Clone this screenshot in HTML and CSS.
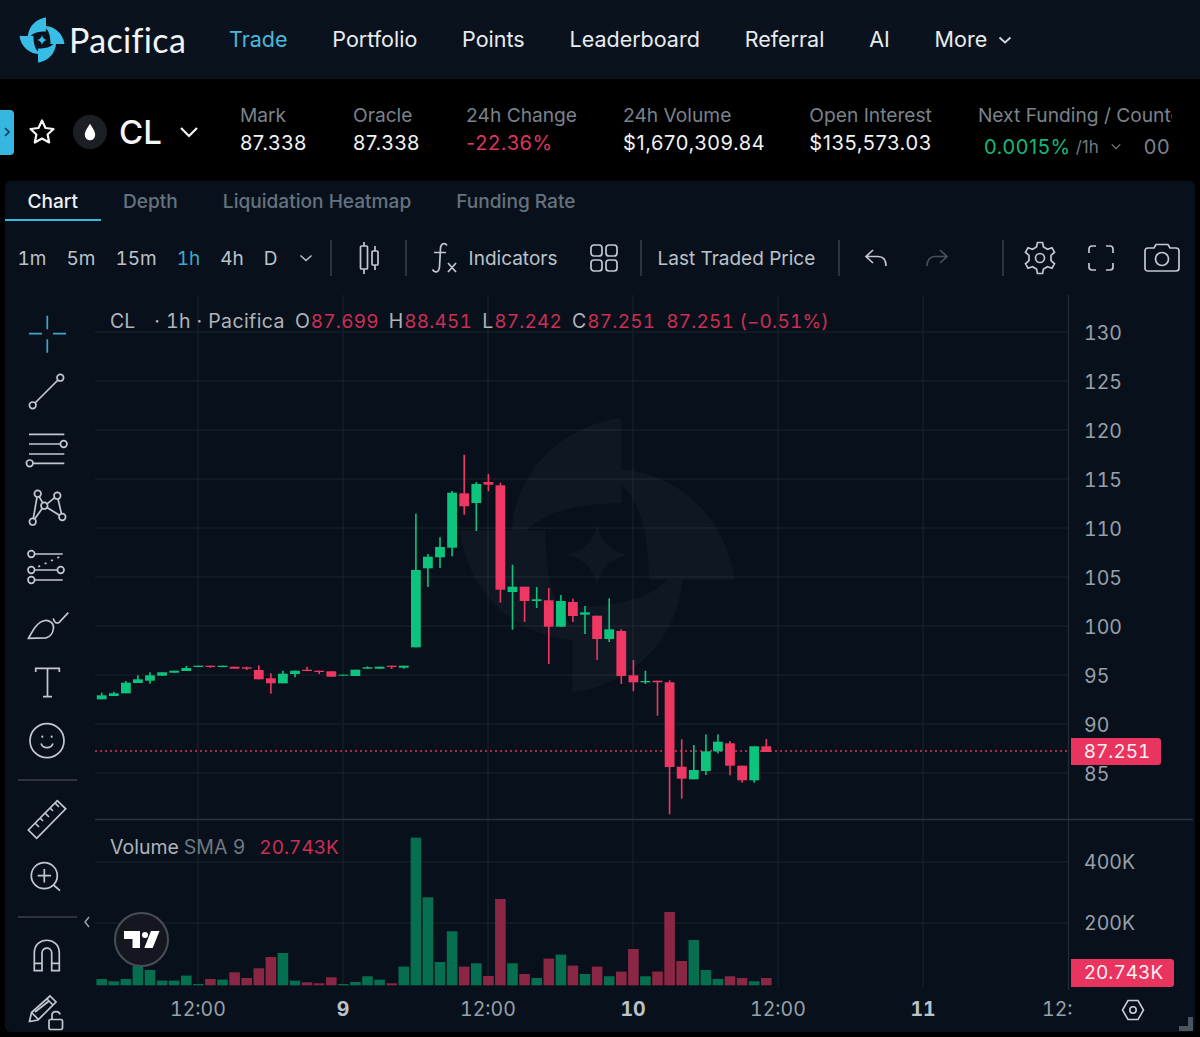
FILE: index.html
```html
<!DOCTYPE html>
<html lang="en">
<head>
  <meta charset="UTF-8" />
  <title>Pacifica - CL</title>
  <link rel="stylesheet" href="styles.css">
</head>
<body>
  <nav class="topnav">
    <div class="brand">
      <svg class="brand-mark" viewBox="-23 -23 46 46">
        <path d="M4 -22.5C-7 -21 -15 -12 -14 0C-12 -6 -6 -8.500 4 -8.500Z" />
        <path d="M4 -22.5C-7 -21 -15 -12 -14 0C-12 -6 -6 -8.500 4 -8.500Z" transform="rotate(90)" />
        <path d="M4 -22.5C-7 -21 -15 -12 -14 0C-12 -6 -6 -8.500 4 -8.500Z" transform="rotate(180)" />
        <path d="M4 -22.5C-7 -21 -15 -12 -14 0C-12 -6 -6 -8.500 4 -8.500Z" transform="rotate(270)" />
        <path d="M0 -5Q.8 -.8 5 0Q.8 .8 0 5Q-.8 .8 -5 0Q-.8 -.8 0 -5Z" />
      </svg>
      <span class="brand-name">Pacifica</span>
    </div>
    <div class="nav-links">
      <a class="nav-link active">Trade</a>
      <a class="nav-link">Portfolio</a>
      <a class="nav-link">Points</a>
      <a class="nav-link">Leaderboard</a>
      <a class="nav-link">Referral</a>
      <a class="nav-link">AI</a>
      <a class="nav-link">More
        <svg class="nav-caret" viewBox="0 0 14 8"><path d="M1.5 1.5L7 6.5L12.5 1.5" /></svg>
      </a>
    </div>
  </nav>

  <section class="stats-bar">
    <div class="side-tab"><svg viewBox="0 0 8 14"><path d="M2 3L6 7L2 11" /></svg></div>
    <svg class="fav-star" viewBox="0 0 30 30"><path d="M15 3.5L18.5 11L26.5 12L20.6 17.5L22.2 25.5L15 21.5L7.8 25.5L9.4 17.5L3.5 12L11.5 11Z" /></svg>
    <div class="coin"><svg viewBox="0 0 16 22"><path d="M8 1C11 6 14 9.500 14 14A6 6 0 0 1 2 14C2 9.500 5 6 8 1Z" /></svg></div>
    <span class="symbol">CL</span>
    <svg class="symbol-caret" viewBox="0 0 20 12"><path d="M2 2L10 10L18 2" /></svg>
    <div class="stats">
      <div class="stat"><span class="stat-label">Mark</span><span class="stat-value">87.338</span></div>
      <div class="stat"><span class="stat-label">Oracle</span><span class="stat-value">87.338</span></div>
      <div class="stat"><span class="stat-label">24h Change</span><span class="stat-value down">-22.36%</span></div>
      <div class="stat stat-volume"><span class="stat-label">24h Volume</span><span class="stat-value">$1,670,309.84</span></div>
      <div class="stat"><span class="stat-label">Open Interest</span><span class="stat-value">$135,573.03</span></div>
      <div class="stat stat-funding">
        <span class="stat-label">Next Funding / Countdown</span>
        <span class="funding-row">
          <span class="funding-rate">0.0015%</span>
          <span class="funding-unit">/1h</span>
          <svg class="funding-caret" viewBox="0 0 14 8"><path d="M2 1.500L7 6.500L12 1.500" /></svg>
          <span class="funding-time">00</span>
        </span>
      </div>
    </div>
  </section>

  <main class="panel">
    <div class="tabs">
      <a class="tab active">Chart</a>
      <a class="tab">Depth</a>
      <a class="tab">Liquidation Heatmap</a>
      <a class="tab">Funding Rate</a>
    </div>

    <div class="toolbar">
      <div class="intervals">
        <span>1m</span><span>5m</span><span>15m</span><span class="active">1h</span><span>4h</span><span>D</span>
      </div>
      <svg class="tb-caret" viewBox="0 0 14 8"><path d="M1.500 1.500L7 6.500L12.500 1.500" /></svg>
      <i class="tb-sep"></i>
      <svg class="tb-icon candles-icon" viewBox="0 0 26 34">
        <path d="M8 1V5M8 28V33M19 5V10M19 24V29" />
        <rect x="4.500" y="5" width="7" height="23" rx="1" />
        <rect x="16" y="10" width="6" height="14" rx="1" />
      </svg>
      <i class="tb-sep sep-candles"></i>
      <svg class="tb-icon fx-icon" viewBox="0 0 26 32">
        <path d="M16 3.500C14 .5 10 1 9.500 6L8.500 25C8 31 3.500 31 1.500 27.500M3 10.500H15M17 21L25 30M25 21L17 30" />
      </svg>
      <span class="tb-text indicators">Indicators</span>
      <svg class="tb-icon layout-icon" viewBox="0 0 28 28">
        <rect x="1" y="1" width="11" height="11" rx="3" /><rect x="16" y="1" width="11" height="11" rx="3" />
        <rect x="1" y="16" width="11" height="11" rx="3" /><rect x="16" y="16" width="11" height="11" rx="3" />
      </svg>
      <i class="tb-sep sep-layout"></i>
      <span class="tb-text">Last Traded Price</span>
      <i class="tb-sep sep-price"></i>
      <svg class="tb-icon undo-icon" viewBox="0 0 24 20"><path d="M9 2L2 8.500L9 15M2 8.500H14C19 8.500 22 12 22 18" /></svg>
      <svg class="tb-icon redo-icon" viewBox="0 0 24 20"><path d="M15 2L22 8.500L15 15M22 8.500H10C5 8.500 2 12 2 18" /></svg>
      <i class="tb-sep sep-redo"></i>
      <svg class="tb-icon gear-icon" viewBox="0 0 34 34">
        <path d="M14.500 1.500H19.500L20.500 6L24.500 8.300L29 6.800L31.500 11.200L28 14.300V19.700L31.500 22.800L29 27.200L24.500 25.700L20.500 28L19.500 32.500H14.500L13.500 28L9.500 25.700L5 27.200L2.500 22.800L6 19.700V14.300L2.500 11.200L5 6.800L9.500 8.300L13.500 6Z" />
        <circle cx="17" cy="17" r="4.500" />
      </svg>
      <svg class="tb-icon expand-icon" viewBox="0 0 28 28"><path d="M9 2H5Q2 2 2 5V9M19 2H23Q26 2 26 5V9M9 26H5Q2 26 2 23V19M19 26H23Q26 26 26 23V19" /></svg>
      <svg class="tb-icon camera-icon" viewBox="0 0 36 30">
        <path d="M4 5H10L12 1.500H24L26 5H32Q35 5 35 8V25Q35 28 32 28H4Q1 28 1 25V8Q1 5 4 5Z" />
        <circle cx="18" cy="16" r="6.500" />
      </svg>
    </div>

    <div class="chart-area">
      <aside class="tools">
        <svg class="tool tool-active" viewBox="17 305 60 58"><path d="M29 333.700H42M53 333.700H66M47.300 315.700V329.300M47.300 339.300V352.700" /></svg>
        <svg class="tool" viewBox="17 363 60 58"><circle cx="60.300" cy="377.700" r="3.300" /><circle cx="32.700" cy="405.300" r="3.300" /><path d="M35 403L58 380" /></svg>
        <svg class="tool" viewBox="17 421 60 58">
          <path d="M29 434.300H64.300M29 444H60.400M29 454H64.300M33 463.300H64.300" />
          <circle cx="63.700" cy="444" r="3.300" /><circle cx="29.700" cy="463.300" r="3.300" />
        </svg>
        <svg class="tool" viewBox="17 479 60 58">
          <path d="M37 497L33.300 518.500M39.200 496.700L42.700 502.800M47 503.800L54.800 497.700M58 499L61.500 513.800M47 507.500L59.500 515.200M42.300 508.300L34.700 519" />
          <circle cx="37.700" cy="493.700" r="3.300" /><circle cx="57.300" cy="495.700" r="3.300" /><circle cx="44.300" cy="505.700" r="3.300" /><circle cx="32.700" cy="521.700" r="3.300" /><circle cx="62.300" cy="517" r="3.300" />
        </svg>
        <svg class="tool" viewBox="17 537 60 58">
          <path d="M34.600 554H62.700M34.600 570H57.400M34.600 580H62.700" />
          <circle cx="31.300" cy="554" r="3.300" /><circle cx="31.300" cy="570" r="3.300" /><circle cx="60.700" cy="570" r="3.300" /><circle cx="31.300" cy="580" r="3.300" />
          <path class="dots" d="M38.300 566.700L60 556.700" />
        </svg>
        <svg class="tool" viewBox="17 595 60 58">
          <path d="M28.500 638.300C33 630 37 622 45 620.500C49 620 54 623 53.500 628C53 633 50 637 46 637.800Z" />
          <path d="M53.300 618.300C54 622 56 624 59 622.500L68.300 612.700" />
        </svg>
        <svg class="tool" viewBox="17 653 60 58"><path d="M35.700 672V668.300H59.300V672M47.500 668.300V696.700M43 696.700H52" /></svg>
        <svg class="tool" viewBox="17 711 60 58">
          <circle cx="47" cy="740.700" r="17" /><path d="M41 743.500C43 749 51 749 53 743.500" />
          <circle class="solid" cx="42.300" cy="736.700" r="1.100" /><circle class="solid" cx="51.700" cy="736.700" r="1.100" />
        </svg>
        <i class="tools-sep"></i>
        <svg class="tool" viewBox="17 790 60 58">
          <path d="M28.300 830L57.300 800.700L65.700 808.800L36.700 838.300Z" />
          <path d="M35 823L39 827M40 818L43 821M45 813L49 817M50 808L53 811M55 803L59 807" />
        </svg>
        <svg class="tool" viewBox="17 848 60 58">
          <circle cx="44.300" cy="875.700" r="13" /><path d="M44.300 869V882.400M37.600 875.700H51M53.500 885L60 890.700" />
        </svg>
        <i class="tools-sep"></i>
        <svg class="tool" viewBox="17 928 60 58">
          <path d="M34.300 971.700V954C34.300 937 59.300 937 59.300 954V971.700H51.700V954C51.700 947.500 42 947.500 42 954V971.700ZM34.300 964.300H42M51.700 964.300H59.300" />
        </svg>
        <svg class="tool" viewBox="17 986 60 58">
          <path d="M29.500 1022.500L31.500 1013.500L50 997L56 1003L38 1021ZM47 1000L53 1006M32 1014L38 1020M35 1013L49 1002" />
          <rect x="49" y="1020.500" width="13.500" height="10" rx="1.500" />
          <path d="M52 1020.500V1016C52 1011.500 59.500 1011.500 60 1015.500" />
        </svg>
      </aside>

      <div class="plot">
        <svg id="chart" class="chart-svg" viewBox="95 295 1100 737"></svg>

        <div class="legend price-legend">
          <span class="lg-name">CL</span>
          <span class="lg-meta">&middot; 1h &middot; Pacifica</span>
          <span class="lg-ohlc">O<b>87.699</b></span>
          <span class="lg-ohlc">H<b>88.451</b></span>
          <span class="lg-ohlc">L<b>87.242</b></span>
          <span class="lg-ohlc">C<b>87.251</b></span>
          <b class="lg-change">87.251 (&minus;0.51%)</b>
        </div>
        <div class="legend volume-legend">
          <span>Volume</span>
          <span class="lg-sma">SMA 9</span>
          <b>20.743K</b>
        </div>

        <div class="price-tag last-price">87.251</div>
        <div class="price-tag last-volume">20.743K</div>

        <svg class="collapse-arrow" viewBox="0 0 8 14"><path d="M6 2L2 7L6 12" /></svg>
        <div class="tv-badge">
          <svg viewBox="124 931 36 19">
            <path d="M124 932H140V949H132.500V940H124Z" />
            <circle cx="145" cy="936" r="3" />
            <path d="M151 932H159.500L152.700 949H144.300Z" />
          </svg>
        </div>
        <svg class="axis-settings" viewBox="0 0 24 22">
          <path d="M7 1.500H17L22.500 11L17 20.500H7L1.500 11Z" /><circle cx="12" cy="11" r="3.200" />
        </svg>
        <i class="resize-corner"></i>
      </div>
    </div>
  </main>

  <script src="script.js"></script>
</body>
</html>
```

FILE: styles.css
```css
* {
  box-sizing: border-box;
}

body {
  margin: 0;
  width: 1200px;
  height: 1037px;
  overflow: hidden;
  background: #000;
  color: #e6e9ed;
  font-family: 'Inter', 'Liberation Sans', sans-serif;
}

/* top nav */
.topnav {
  display: flex;
  align-items: center;
  height: 79px;
  padding-left: 19px;
  background: #0a131d;
}

.brand {
  display: flex;
  align-items: center;
  width: 210px;
}

.brand-mark {
  width: 46px;
  height: 46px;
  fill: #38bde6;
}

.brand-name {
  margin-left: 4px;
  font-family: 'Lato', sans-serif;
  font-size: 34px;
  font-weight: 400;
  letter-spacing: .35px;
  color: #f2f4f6;
}

.nav-links {
  display: flex;
  align-items: center;
  gap: 44.800px;
  margin-top: -2px;
}

.nav-link {
  display: flex;
  align-items: center;
  font-size: 21.500px;
  color: #e8ebef;
}

.nav-link.active {
  color: #4cb7dc;
}

.nav-caret {
  width: 14px;
  height: 8px;
  margin-left: 11px;
  margin-top: 3px;
  fill: none;
  stroke: #d5d9de;
  stroke-width: 1.800;
}

/* symbol stats */
.stats-bar {
  display: flex;
  align-items: center;
  height: 102px;
  padding-top: 6px;
  background: #000;
  overflow: hidden;
}

.side-tab {
  display: flex;
  align-items: center;
  justify-content: center;
  width: 14px;
  height: 45px;
  margin-top: -2px;
  background: #36b6e0;
  border-radius: 0 4px 4px 0;
}

.side-tab svg {
  width: 8px;
  height: 14px;
  fill: none;
  stroke: #0a3a50;
  stroke-width: 1.600;
}

.fav-star {
  width: 30px;
  height: 30px;
  margin-left: 13px;
  margin-top: -2px;
  fill: none;
  stroke: #f3f4f6;
  stroke-width: 2.200;
  stroke-linejoin: round;
}

.coin {
  display: flex;
  align-items: center;
  justify-content: center;
  width: 34px;
  height: 34px;
  margin-left: 16px;
  margin-top: -2px;
  background: #1b1e23;
  border-radius: 50%;
}

.coin svg {
  width: 14px;
  height: 19px;
  fill: #fff;
}

.symbol {
  margin-left: 12px;
  margin-top: -2px;
  font-size: 33px;
  font-weight: 500;
  color: #f5f6f7;
}

.symbol-caret {
  width: 20px;
  height: 12px;
  margin-left: 17px;
  margin-top: -2px;
  fill: none;
  stroke: #f3f4f6;
  stroke-width: 2.200;
}

.stats {
  display: flex;
  gap: 46px;
  margin-left: 41px;
  margin-top: -5px;
}

.stat {
  display: flex;
  flex-direction: column;
  gap: 4px;
  white-space: nowrap;
}

.stat-volume {
  margin-right: -2px;
}

.stat-label {
  font-size: 19.200px;
  line-height: 24px;
  color: #7b828c;
}

.stat-value {
  font-size: 20px;
  line-height: 24px;
  letter-spacing: .6px;
  color: #f1f3f5;
}

.stat-value.down {
  color: #dd3560;
}

.stat-funding {
  width: 194px;
  overflow: hidden;
}

.funding-row {
  display: flex;
  align-items: center;
  height: 24px;
  margin-top: 4px;
  padding-left: 6px;
}

.funding-rate {
  font-size: 20px;
  letter-spacing: .6px;
  color: #13b979;
}

.funding-unit {
  margin-left: 5px;
  font-size: 17px;
  color: #737a84;
}

.funding-caret {
  width: 12px;
  height: 7px;
  margin-left: 11px;
  fill: none;
  stroke: #737a84;
  stroke-width: 1.500;
}

.funding-time {
  margin-left: 22px;
  font-size: 20px;
  letter-spacing: .6px;
  color: #7b828c;
}

/* chart panel */
.panel {
  display: flex;
  flex-direction: column;
  width: 1190px;
  height: 851px;
  margin-left: 5px;
  background: #08111b;
  border-radius: 6px;
  overflow: hidden;
}

.tabs {
  display: flex;
  height: 40px;
}

.tab {
  display: flex;
  align-items: center;
  height: 40px;
  padding: 1px 22.500px 0;
  font-size: 19.100px;
  font-weight: 500;
  color: #66727f;
  border-bottom: 2px solid transparent;
}

.tab.active {
  color: #eef1f4;
  border-bottom-color: #34b9e0;
}

.toolbar {
  display: flex;
  align-items: center;
  height: 74px;
  padding-left: 12.500px;
  font-size: 19px;
  color: #bcc2ca;
}

.intervals {
  display: flex;
  gap: 20px;
  font-variant-numeric: tabular-nums;
}

.intervals .active {
  color: #3fa6cc;
}

.tb-caret {
  width: 14px;
  height: 8px;
  margin-left: 21px;
  fill: none;
  stroke: #bcc2ca;
  stroke-width: 1.500;
}

.tb-sep {
  width: 2px;
  height: 36px;
  margin-left: 17px;
  background: #2c333c;
}

.tb-icon {
  flex: none;
  fill: none;
  stroke: #c3c8cf;
  stroke-width: 1.700;
}

.candles-icon {
  width: 26px;
  height: 34px;
  margin-left: 24px;
}

.sep-candles {
  margin-left: 23px;
}

.fx-icon {
  width: 26px;
  height: 32px;
  margin-left: 24px;
}

.tb-text {
  white-space: nowrap;
}

.indicators {
  margin-left: 12px;
}

.layout-icon {
  width: 28px;
  height: 28px;
  margin-left: 33px;
}

.sep-layout {
  margin-left: 22px;
  margin-right: 15px;
}

.sep-price {
  margin-left: 23px;
}

.undo-icon {
  width: 24px;
  height: 20px;
  margin-left: 24px;
}

.redo-icon {
  width: 24px;
  height: 20px;
  margin-left: 37px;
  stroke: #48505a;
}

.sep-redo {
  margin-left: 53px;
}

.gear-icon {
  width: 34px;
  height: 34px;
  margin-left: 19px;
}

.expand-icon {
  width: 28px;
  height: 28px;
  margin-left: 30px;
}

.camera-icon {
  width: 36px;
  height: 30px;
  margin-left: 29px;
}

.chart-area {
  display: flex;
  flex: 1;
  min-height: 0;
}

/* drawing tools */
.tools {
  flex: none;
  display: flex;
  flex-direction: column;
  width: 90px;
  padding: 10px 0 0 12px;
}

.tool {
  flex: none;
  width: 60px;
  height: 58px;
  fill: none;
  stroke: #c3c8cf;
  stroke-width: 1.700;
}

.tool-active {
  stroke: #3fa6cc;
}

.tool .solid {
  fill: #c3c8cf;
  stroke: none;
}

.tool .dots {
  stroke-dasharray: 2 5;
}

.tools-sep {
  flex: none;
  width: 59px;
  height: 2px;
  margin: 10px 0 9px 1px;
  background: #2d343d;
}

/* plot */
.plot {
  position: relative;
  flex: 1;
  font-variant-numeric: tabular-nums;
}

.chart-svg {
  display: block;
  width: 1100px;
  height: 737px;
}

.grid-line {
  stroke: #1a222c;
  stroke-width: 1;
}

.axis-line {
  stroke: #252d37;
  stroke-width: 1.200;
}

.pane-line {
  stroke: #2a323c;
  stroke-width: 1.500;
}

.last-line {
  stroke: #d8365f;
  stroke-width: 1.300;
  stroke-dasharray: 2 3;
}

.watermark {
  fill: #fff;
  opacity: .026;
}

.candle-up {
  fill: #0cc47d;
}

.candle-down {
  fill: #ee3762;
}

.vol-up {
  fill: #056f50;
}

.vol-down {
  fill: #8a2745;
}

.axis-text {
  font-size: 19.500px;
  fill: #98a0aa;
}

.axis-text.day {
  font-weight: 700;
  fill: #bcc2c9;
}

.legend {
  position: absolute;
  display: flex;
  align-items: center;
  left: 15px;
  font-size: 19.500px;
  color: #aeb4bc;
  white-space: nowrap;
}

.legend b {
  font-size: 19px;
  font-weight: 400;
  color: #cc2e55;
}

.price-legend {
  top: 14px;
}

.lg-meta {
  margin-left: 19px;
  letter-spacing: .4px;
}

.lg-ohlc {
  margin-left: 10px;
}

.lg-ohlc b,
.lg-change {
  margin-left: 1px;
  letter-spacing: .2px;
}

.lg-ohlc:first-of-type {
  margin-left: 14px;
}

.lg-change {
  margin-left: 11px;
}

.volume-legend {
  top: 540px;
  gap: 5px;
}

.lg-sma {
  color: #717883;
}

.volume-legend b {
  margin-left: 9px;
}

.price-tag {
  position: absolute;
  left: 975.700px;
  height: 27.500px;
  padding-left: 13px;
  font-size: 19px;
  line-height: 27.500px;
  color: #fdeef2;
  background: #e8345f;
  border-radius: 0 3px 3px 0;
}

.last-price {
  top: 442.500px;
  width: 90px;
}

.last-volume {
  top: 664px;
  width: 103.500px;
}

.collapse-arrow {
  position: absolute;
  left: -12px;
  top: 620px;
  width: 8px;
  height: 14px;
  fill: none;
  stroke: #9aa1aa;
  stroke-width: 1.500;
}

.tv-badge {
  position: absolute;
  left: 19px;
  top: 617px;
  display: flex;
  align-items: center;
  justify-content: center;
  width: 55px;
  height: 55px;
  background: #14171f;
  border: 2px solid #4a4d55;
  border-radius: 50%;
}

.tv-badge svg {
  width: 36px;
  height: 19px;
  fill: #fff;
}

.axis-settings {
  position: absolute;
  left: 1026px;
  top: 704px;
  width: 24px;
  height: 22px;
  fill: none;
  stroke: #c9ced4;
  stroke-width: 1.600;
}

.resize-corner {
  position: absolute;
  right: 2px;
  bottom: 1px;
  width: 14px;
  height: 14px;
  border-right: 5px solid #4b5560;
  border-bottom: 5px solid #4b5560;
}
```

FILE: script.js
```js
// pixel data read as [open/close top, bottom, wick top, wick bottom, up?, volume height]
const candles = [
  [695.3, 699.3, 692.7, 699.3, 1, 6.3], [693.3, 696, 691.7, 696, 1, 4], [682.7, 693.3, 681, 693.3, 1, 6.3],
  [679.3, 683, 675.3, 683, 1, 19.3], [675.3, 680.7, 672.3, 683.7, 1, 15.3], [672.3, 675.7, 672.3, 675.7, 1, 4.7],
  [670.7, 672.7, 670.7, 672.7, 1, 4.7], [668, 671, 666, 671, 1, 9.7], [665.7, 667, 665.7, 667, 1, 1.3],
  [665.7, 667, 665.7, 667.7, 0, 6.3], [665.7, 667, 665.7, 667.3, 1, 5.7], [666.7, 668.7, 666.7, 668.7, 0, 13],
  [667.3, 668.7, 666.7, 670, 0, 7.3], [670, 679.3, 665.3, 679.3, 0, 17], [678.3, 683.3, 673.3, 693.7, 0, 28.3],
  [673.7, 683.3, 670.7, 683.3, 1, 32.3], [670.7, 674, 670.7, 677.3, 1, 4.7], [669.7, 671, 666.7, 671, 0, 3],
  [670.7, 672, 670.7, 674, 0, 2], [671.3, 676.7, 671.3, 676.7, 0, 8], [674.7, 675.7, 674.7, 675.7, 1, 1.3],
  [669.7, 676, 669.7, 676, 1, 3.3], [667.3, 668.7, 666.3, 668.7, 1, 9], [666.7, 668.7, 666.7, 668.7, 1, 5.7],
  [665.7, 667, 665.7, 669, 0, 2], [665.7, 667.7, 665.7, 668.7, 1, 18.7], [570, 647.3, 513.7, 647.3, 1, 147.7],
  [556.7, 568.3, 554, 587, 1, 88], [547, 557.3, 537.3, 568, 1, 23.3], [492.7, 547.7, 491, 556.3, 1, 54],
  [493.3, 506.3, 454.7, 514.7, 0, 18.7], [484, 503, 482, 531, 1, 22], [482, 484.7, 474, 491.3, 0, 9.3],
  [485.3, 589.7, 482.7, 602.7, 0, 86.3], [586.7, 592, 564.7, 629.7, 1, 22], [586.7, 601, 586.7, 622, 0, 11.3],
  [599.3, 601, 587, 608, 1, 7.3], [600.3, 626.7, 588, 664, 0, 26.7], [601, 626.7, 595, 626.7, 1, 30.7],
  [602, 616, 598.7, 622, 0, 19.7], [612.3, 614.7, 606, 634, 1, 11.3], [615.7, 639, 615.7, 660, 0, 18.7],
  [629.3, 639, 598.3, 642, 1, 9], [631, 676, 629.3, 684, 0, 13.7], [675.3, 682.3, 660, 691.3, 0, 36.3],
  [681, 682.3, 670.7, 684, 1, 9], [680.7, 682.3, 680.7, 715.7, 0, 13.7], [682.3, 767, 680.3, 814.3, 0, 73.3],
  [766.7, 778.7, 739.3, 798.7, 0, 24.3], [770, 779.3, 745, 779.3, 1, 45.3], [751.3, 771, 734.3, 775, 1, 15.3],
  [741.7, 751.3, 734.3, 753.3, 1, 6.3], [743.3, 765.7, 741, 775.3, 0, 9], [765.7, 780.3, 765.7, 782.7, 0, 7.3],
  [746.3, 780.3, 746.3, 782.7, 1, 4], [746.3, 752, 739, 752, 0, 7.3]
];

const priceTicks = [[130, 332], [125, 381], [120, 430], [115, 479], [110, 528], [105, 577], [100, 626], [95, 675], [90, 724], [85, 773]];
const volumeTicks = [['400K', 862], ['200K', 923]];
const timeTicks = [['12:00', 198], ['9', 343, 1], ['12:00', 488], ['10', 633, 1], ['12:00', 778], ['11', 923, 1]];

const blade = 'M4 -22.5C-7 -21 -15 -12 -14 0C-12 -6 -6 -8.5 4 -8.5Z';
let html = '';

// grid
priceTicks.forEach(t => { html += `<line class="grid-line" x1="95" x2="1068" y1="${t[1]}" y2="${t[1]}"/>`; });
volumeTicks.forEach(t => { html += `<line class="grid-line" x1="95" x2="1068" y1="${t[1]}" y2="${t[1]}"/>`; });
timeTicks.forEach(t => { html += `<line class="grid-line" x1="${t[1]}" x2="${t[1]}" y1="295" y2="987"/>`; });

// faint logo behind the candles
html += '<g class="watermark" transform="translate(597 555) scale(6.1)">';
[0, 90, 180, 270].forEach(a => { html += `<path d="${blade}" transform="rotate(${a})"/>`; });
html += '<path d="M0 -5Q.8 -.8 5 0Q.8 .8 0 5Q-.8 .8 -5 0Q-.8 -.8 0 -5Z"/></g>';

html += '<line class="axis-line" x1="1068.500" x2="1068.500" y1="295" y2="990"/>';
html += '<line class="pane-line" x1="95" x2="1193" y1="819.500" y2="819.500"/>';
html += '<line class="last-line" x1="95" x2="1070" y1="751" y2="751"/>';

candles.forEach((c, i) => {
  const x = 101.7 + 12.083 * i;
  const kind = c[4] ? 'up' : 'down';
  html += `<rect class="vol-${kind}" x="${(x - 5.3).toFixed(1)}" y="${(985.3 - c[5]).toFixed(1)}" width="10.600" height="${c[5]}"/>`;
  html += `<rect class="candle-${kind}" x="${(x - .8).toFixed(1)}" y="${c[2]}" width="1.600" height="${(c[3] - c[2]).toFixed(1)}"/>`;
  html += `<rect class="candle-${kind}" x="${(x - 4.9).toFixed(1)}" y="${c[0]}" width="9.800" height="${(c[1] - c[0]).toFixed(1)}"/>`;
});

// axis labels
priceTicks.forEach(t => { html += `<text class="axis-text" x="1084" y="${t[1] + 7.5}">${t[0]}</text>`; });
volumeTicks.forEach(t => { html += `<text class="axis-text" x="1084" y="${t[1] + 7}">${t[0]}</text>`; });
timeTicks.forEach(t => {
  html += `<text class="axis-text${t[2] ? ' day' : ''}" x="${t[1]}" y="1016" text-anchor="middle">${t[0]}</text>`;
});
html += '<text class="axis-text" x="1042" y="1016">12:</text>';

document.getElementById('chart').innerHTML = html;
```
